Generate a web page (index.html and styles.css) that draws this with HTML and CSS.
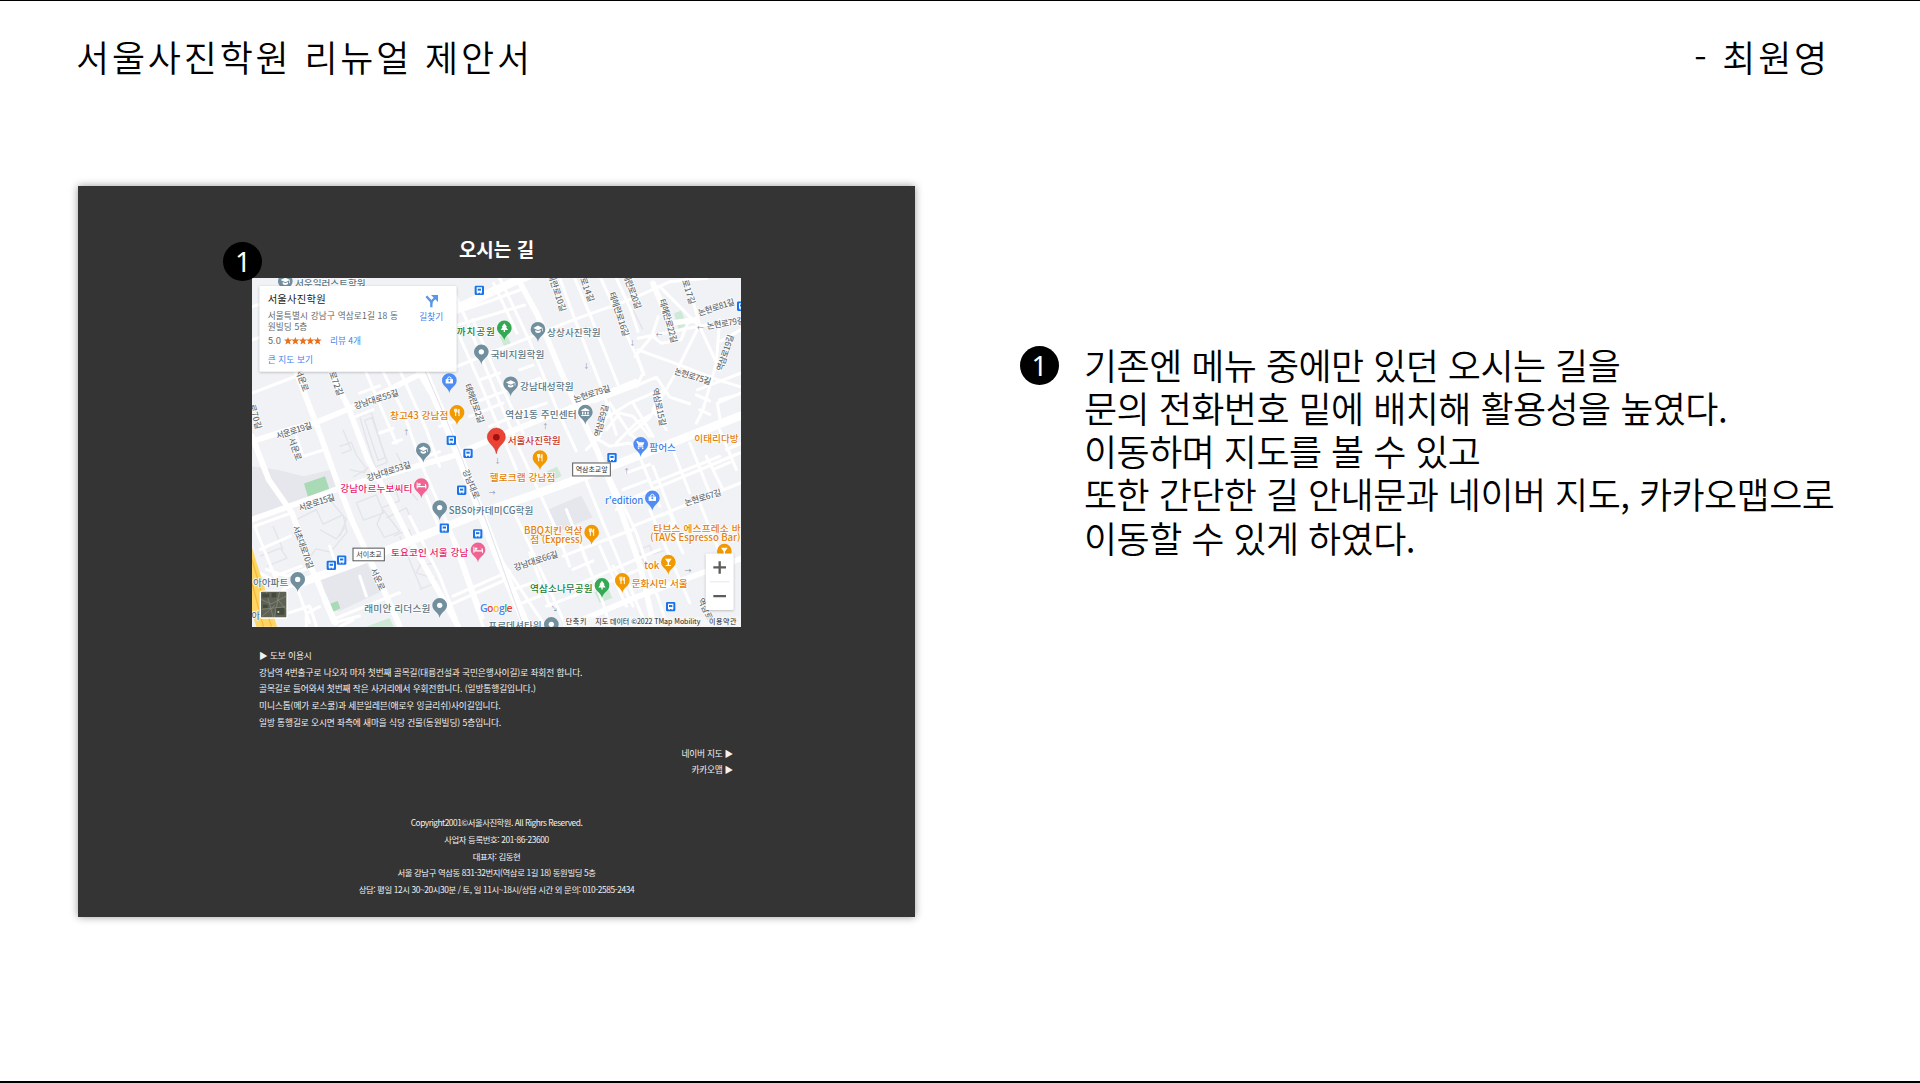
FILE: index.html
```html
<!DOCTYPE html>
<html lang="ko">
<head>
<meta charset="utf-8">
<title>서울사진학원 리뉴얼 제안서</title>
<link rel="stylesheet" href="styles.css">
</head>
<body>
<div class="slide">
  <header class="slide-header">
    <h1>서울사진학원 리뉴얼 제안서</h1>
    <p class="author">- 최원영</p>
  </header>
  <main class="content">
    <section class="mockup">
      <h2>오시는 길</h2>
      <div class="map-wrap">
        <span class="badge badge-map">1</span>
        <svg class="map" viewBox="37 24 1467 1049" preserveAspectRatio="none">
          <defs>
            <path id="pin" d="M0 38C-3 20-22 17-22 0a22 22 0 1 1 44 0C22 17 3 20 0 38z"/>
            <circle id="i-dot" r="8" fill="#fff"/>
            <g id="i-cap" fill="#fff"><path d="M-14-4L0-11 14-4 0 3zM-8 2v6Q0 14 8 8V2L0 6z"/><path d="M12-3h2v9h-2z"/></g>
            <g id="i-food" fill="none" stroke="#fff" stroke-width="3"><path d="M-7-11v7q0 4 3 4t3-4v-7M-4-11V11M6 11V-10q-3 3-3 10h3"/></g>
            <g id="i-bag" fill="#fff"><path d="M-11-4h22v13h-22z"/><path d="M-5-4v-4q5-6 10 0v4" fill="none" stroke="#fff" stroke-width="3"/><circle cy="1" r="3" fill="#4285f4"/></g>
            <g id="i-bed" fill="#fff"><path d="M-14-9h3v10h22v-3q0-4-4-4h-9v5h-7v-5h11q13-1 13 7v8h-3V5h-23v4h-3z"/><circle cx="-7" cy="-3" r="3"/></g>
            <path id="i-tree" fill="#fff" d="M0-14l8 11H5l6 9H2v6h-4V6h-9l6-9h-3z"/>
            <g id="i-cart" fill="#fff"><path d="M-13-10h5l2 4h17L7 4h-13l-1 2H8v3h-18l3-6-5-10z"/><circle cx="-6" cy="12" r="2.5"/><circle cx="6" cy="12" r="2.5"/></g>
            <path id="i-hall" fill="#fff" d="M0-12L12-6v3h-24v-3zM-10-1h4v8h-4zM-2-1h4v8h-4zM6-1h4v8H6zM-12 9h24v3h-24z"/>
            <path id="i-bar" fill="#fff" d="M-10-10h20L2 1v8h6v3H-8V9h6V1z"/>
            <g id="bus"><rect x="-14" y="-14" width="28" height="28" rx="4" fill="#1a73e8"/><path d="M-8-9H8V7H6v3H3V7h-6v3h-3V7h-2z" fill="#fff"/><path d="M-5-5H5v6H-5z" fill="#1a73e8"/></g>
            <path id="star" d="M0-12l3 8h9l-7 6 3 9-8-5-8 5 3-9-7-6h9z"/>
          </defs>
          <rect x="37" y="24" width="1467" height="1049" fill="#f1f2f5"/>
          <g fill="#e6e7ed">
            <path d="M37 590l75 10 80 20 82 -20 20 65-180 60-77 25z"/>
            <path d="M925 720l100-42 34 66-108 42zM245 930l135-50 48 85-128 60h-30z"/>
          </g>
          <g fill="#ceead6"><path d="M1303 130l22-8 17 45-26 10zM780 200l20-8 14 30-20 9zM922 605l30-14 14 28-30 15zM1064 968l40-16 14 34-38 14zM380 1072l70-26 12 26z"/></g>
          <path fill="#a8dab5" d="M193 642l63-22 14 42-64 23zM272 1003l22-8 8 22-22 10z"/>
          <g class="outline">
            <path d="M360 440l35-12 28 90 20 60-36 14-26-80zM375 452l22-8 40 120-22 8zM300 530l35-12 16 40 30 40-40 24M310 480l25 60-30 12M330 600l44 10 12-18M170 750l60-30 20 44 60-28 12 52-50 60-44-10-20 30M240 780l50 28 30-40M270 690l50 60-20 50M350 700l60-24 22 54-60 22zM400 660l60-20 20 54-56 22M430 720l50 66-46 18-22-40zM440 745l60-30 26 60M490 640l44 52M462 800l46-20 16 44M480 800l66 160M520 800l22 90 40-10M560 850l-30 60 60 20M540 960l50-20 20 40M62 860l60-24 20 30-60 24M100 770l30 70M1200 840l30-12 10 26 32-10M1200 850l20 40M470 550l30 60M1180 120l30 60M130 140l60-20M500 170l60-24"/>
          </g>
          <g class="road minor">
            <path d="M37 370l130-50M37 210l60-20M37 110L210 60M150 24l90 200M220 24l50 130M350 24l30 80M640 60l40 90 80 200 80 190 110 240 40 110M560 310L640 490"/>
            <path d="M660 200l70 160 100 240M700 150l60 140 90 200M780 24l90 190 80 200 60 130M762 40l70 150M960 24l40 110 90 230 40 130M1005 24l50 120 80 200M1083 24l50 110 60 130 20 50M1130 24l45 100 20 60"/>
            <path d="M640 130l120-40 80-30M651 290l200-80 150-60 180-65 110-50 110-10M700 400l120-45M840 350l60-25 20 30M720 330l60-20M750 470l120-50M690 440l100-40M840 300l40-14M655 165l200-60M800 440l120-40"/>
            <path d="M1195 205l180-35 128-22M1195 240l110 40 130 50 70 22M1186 260l50-60 20-60M1240 200l24 20 60-10 20-50M1190 250l20 60-20 40M1260 50l120 120 60 130M1340 24l40 140-80 160-70 120-60 50"/>
            <path d="M1440 150l-10 130-40 140-20 40M1503 180l-60 34M1503 310l-130 50M1503 370l-70 30 10 60M1370 375l40 18M1380 420l30 14M1440 390l50-14"/>
            <path d="M990 410l80-16 110-42 70-30 40 60 60 20M1090 450l80-50 70-30 40 90M1100 480l40-50 40 10 50 60M1130 520l60-60 70-40M1060 500l50 30 60-10 60 30M1180 400l60 100M1110 400l60 90 40 40M1040 540l40-40 20-60M1270 360l-30 60 40 60"/>
            <path d="M1130 720l60-40 120-50 190-80M1150 660l80-30M1200 560l60 150M1240 590l70 180M1300 540l50 130M1350 520l60 150M1400 560l50 100M1440 480l50 120M1460 540l43-18M1240 640l200-80M1160 610l70-26M1420 600l50-22"/>
            <path d="M1180 770l323-130M1030 610l60 150 80 190 50 120M1100 600l90 190 60 180 30 90M1230 720l120 280M1290 760l40 90M1380 700l60 150M1260 740l30-12 14 40"/>
            <path d="M970 860l130-50 80-30M1000 950l120-50 140-60M1030 850l60 150 20 70M1080 830l80 180M960 830l40-20M1000 900l60-26M1120 890l60 120M920 1010l80-30 200-80M980 720l60 150M720 720l70 160 120 180M810 700l70 150 90 200M870 850l60 160M850 1000l50-20M820 960l60-20"/>
            <path d="M430 305l60 120 60 170 110 250 70 200M480 300l80 180 40 110M530 300l40 70M380 310l90 210M360 370l60-22M400 420l-50 20M420 490l40-14M460 520l26-10M600 470l60-20M560 560l40-14M510 740l90 180 50 130M600 700l80 230 50 140M640 980l170-75M600 1020l200-90M560 680l40 100"/>
            <path d="M170 500l20 60 70-22M45 770l60 150 80-30M62 840l90-40M45 770l100-36M80 900l60 20 80-30M37 900l60 30M130 960l100-40 50 130 200-80M250 990l30 70 80-20M150 1030l60-20 20 60M170 950l40 110M200 1072v-40l40-20M300 1072l40-20M270 830l14 40M360 920l20 60"/>
          </g>
          <g class="road mid">
            <path d="M160 280l80 210 50 140 50 130 60 130 80 180M265 290l60 120 60 160 60 110 60 120 150 270M37 500l50 130 70 100 60 170 70 160"/>
            <path d="M37 515l80-25 120-35 120-50 200-100M37 750l280-100 320-90 110-48 140-56 130-50 170-70"/>
            <path d="M833 24l60 110 70 170 110 240 60 150 70 200 40 178M550 300l80 190"/>
            <path d="M1240 40l50 120 80-10M980 1072l200-85 325-120"/>
          </g>
          <g class="road major">
            <path d="M651 115l150-70 70-30M170 945l170-62 200-80 190-75 230-80 160-60 180-70 203-80"/>
            <path d="M535 260l100 240 70 180 60 160 100 240"/>
          </g>
          <path class="lane" d="M555 300l82 190 66 170 42 110 106 300"/>
          <path d="M37 835l75 237H50L37 1030z" fill="#fdd663"/><path d="M37 870l58 202M37 940l34 132" stroke="#f9b93a" stroke-width="4" fill="none"/>

          <g class="street">
            <text transform="translate(190 330) rotate(70)">서운로</text>
            <text transform="translate(292 340) rotate(70)">로72길</text>
            <text transform="translate(409 386) rotate(-18)" textLength="138">강남대로55길</text>
            <text transform="translate(50 440) rotate(74)">로70길</text>
            <text transform="translate(162 480) rotate(-18)" textLength="112">서운로19길</text>
            <text transform="translate(169 537) rotate(70)">서운로</text>
            <text transform="translate(446 602) rotate(-18)" textLength="138">강남대로53길</text>
            <text transform="translate(230 696) rotate(-18)" textLength="112">서운로15길</text>
            <text transform="translate(193 832) rotate(70)" textLength="136">서초대로70길</text>
            <text transform="translate(417 928) rotate(66)">서운로</text>
            <text transform="translate(697 642) rotate(68)">강남대로</text>
            <text transform="translate(707 400) rotate(70)" textLength="124">테헤란로2길</text>
            <text transform="translate(955 66) rotate(72)" textLength="120">헤란로10길</text>
            <text transform="translate(1045 58) rotate(70)">로14길</text>
            <text transform="translate(1141 132) rotate(72)" textLength="138">테헤란로16길</text>
            <text transform="translate(1180 62) rotate(70)" textLength="112">헤란로20길</text>
            <text transform="translate(1289 152) rotate(74)" textLength="136">테헤란로22길</text>
            <text transform="translate(1350 65) rotate(72)">로17길</text>
            <text transform="translate(1429 109) rotate(-18)" textLength="114">논현로81길</text>
            <text transform="translate(1457 157) rotate(-9)" textLength="114">논현로79길</text>
            <text transform="translate(1454 248) rotate(-72)" textLength="114">역삼로19길</text>
            <text transform="translate(1360 317) rotate(17)" textLength="114">논현로75길</text>
            <text transform="translate(1056 369) rotate(-18)" textLength="114">논현로79길</text>
            <text transform="translate(1261 411) rotate(78)" textLength="116">역삼로15길</text>
            <text transform="translate(1082 452) rotate(-75)" textLength="100">역삼로9길</text>
            <text transform="translate(1389 681) rotate(-17)" textLength="114">논현로67길</text>
            <text transform="translate(888 871) rotate(-18)" textLength="138">강남대로66길</text>
            <text transform="translate(1400 1018) rotate(65)">역삼로</text>
          </g>
          <g class="arrow"><text x="1030" y="294">↓</text><text x="1168" y="224">↓</text><text x="1248" y="202">←</text><text x="1372" y="180">←</text><text x="907" y="478">↑</text><text x="764" y="579">↓</text><text x="490" y="496">↑</text><text x="747" y="677">→</text><text x="1151" y="613">↑</text><text x="1335" y="912">→</text><text x="934" y="1026">↘</text></g>

          <g class="poi slate">
            <text x="166" y="51" textLength="212">서운일러스트학원</text>
            <text x="922" y="197" textLength="161">상상사진학원</text>
            <text x="753" y="264" textLength="161">국비지원학원</text>
            <text x="841" y="361" textLength="161">강남대성학원</text>
            <text x="797" y="444" textLength="214">역삼1동 주민센터</text>
            <text x="627" y="733" textLength="254">SBS아카데미CG학원</text>
            <text x="40" y="949" textLength="106">아아파트</text>
            <text x="374" y="1027" textLength="198">래미안 리더스원</text>
            <text x="746" y="1080" textLength="160">프로데셔타워</text>
            <text x="35" y="1050">아</text>
          </g>
          <g class="poi orange">
            <text x="451" y="447" textLength="175">창고43 강남점</text>
            <text x="750" y="634" textLength="197">헬로크랩 강남점</text>
            <text x="1364" y="517" textLength="133">이태리다방</text>
            <text x="853" y="793" textLength="175">BBQ치킨 역삼</text>
            <text x="872" y="822" textLength="158">점 (Express)</text>
            <text x="1241" y="786" textLength="262">타브스 에스프레소 바</text>
            <text x="1232" y="816" textLength="270">(TAVS Espresso Bar)</text>
            <text x="1214" y="898" textLength="45">tok</text>
            <text x="1176" y="953" textLength="168">문화시민 서울</text>
          </g>
          <g class="poi green"><text x="640" y="194" textLength="126">|까치공원</text><text x="871" y="967" textLength="188">역삼소나무공원</text></g>
          <g class="poi blue"><text x="1229" y="543" textLength="80">팜어스</text><text x="1096" y="704" textLength="115">r'edition</text></g>
          <g class="poi pink"><text x="302" y="666" textLength="216">강남아르누보씨티</text><text x="454" y="860" textLength="232">토요코인 서울 강남</text></g>
          <g class="poi red"><text x="804" y="522" textLength="159">서울사진학원</text></g>

          <g fill="#728f9e">
            <g transform="translate(137 34)"><use href="#pin"/><use href="#i-cap"/></g>
            <g transform="translate(895 178)"><use href="#pin"/><use href="#i-cap"/></g>
            <g transform="translate(725 246)"><use href="#pin"/><use href="#i-dot"/></g>
            <g transform="translate(813 342)"><use href="#pin"/><use href="#i-cap"/></g>
            <g transform="translate(1037 427)"><use href="#pin"/><use href="#i-hall"/></g>
            <g transform="translate(551 541)"><use href="#pin"/><use href="#i-cap"/></g>
            <g transform="translate(600 714)"><use href="#pin"/><use href="#i-dot"/></g>
            <g transform="translate(174 930)"><use href="#pin"/><use href="#i-dot"/></g>
            <g transform="translate(600 1008)"><use href="#pin"/><use href="#i-dot"/></g>
            <g transform="translate(935 1065)"><use href="#pin"/><use href="#i-dot"/></g>
          </g>
          <g fill="#f29900">
            <g transform="translate(652 428)"><use href="#pin"/><use href="#i-food"/></g>
            <g transform="translate(901 564)"><use href="#pin"/><use href="#i-food"/></g>
            <g transform="translate(1056 788)"><use href="#pin"/><use href="#i-food"/></g>
            <g transform="translate(1148 933)"><use href="#pin"/><use href="#i-food"/></g>
            <g transform="translate(1286 878)"><use href="#pin"/><use href="#i-bar"/></g>
            <g transform="translate(1454 845)"><use href="#pin"/><use href="#i-bar"/></g>
          </g>
          <g fill="#4f8df5">
            <g transform="translate(629 332)"><use href="#pin"/><use href="#i-bag"/></g>
            <g transform="translate(1238 685)"><use href="#pin"/><use href="#i-bag"/></g>
            <g transform="translate(1203 524)"><use href="#pin"/><use href="#i-cart"/></g>
          </g>
          <g fill="#f06292">
            <g transform="translate(545 648)"><use href="#pin"/><use href="#i-bed"/></g>
            <g transform="translate(715 841)"><use href="#pin"/><use href="#i-bed"/></g>
          </g>
          <g fill="#34a853">
            <g transform="translate(794 174)"><use href="#pin"/><use href="#i-tree"/></g>
            <g transform="translate(1087 948)"><use href="#pin"/><use href="#i-tree"/></g>
          </g>
          <path fill="#ea4335" stroke="#c5221f" stroke-width="1.5" d="M770 552C767 528 743 522 743 502a27 27 0 1 1 54 0C797 522 773 528 770 552z"/><circle cx="770" cy="503" r="10" fill="#a50e0e"/>
          <use href="#bus" x="719" y="61"/><use href="#bus" x="1506" y="109"/><use href="#bus" x="635" y="512"/><use href="#bus" x="685" y="551"/><use href="#bus" x="666" y="662"/><use href="#bus" x="614" y="776"/><use href="#bus" x="714" y="793"/><use href="#bus" x="306" y="872"/><use href="#bus" x="275" y="888"/><use href="#bus" x="1117" y="564"/><use href="#bus" x="1293" y="1012"/>
          <g class="sign">
            <rect x="999" y="580" width="113" height="39"/><text x="1008" y="607" textLength="96">역삼초교앞</text>
            <rect x="340" y="836" width="94" height="38"/><text x="350" y="863" textLength="76">서이초교</text>
          </g>

          <rect x="62" y="965" width="80" height="81" rx="4" fill="#5d6254" stroke="#fff" stroke-width="4"/>
          <path d="M64 990l30 14 46-24M80 967l20 76M120 967l-16 76M66 1020l72-8M110 985l28 34M66 1042l40-34" stroke="#8d8e80" stroke-width="2" fill="none"/>
          <path d="M68 972h20v12H68zM110 1016h24v20h-24zM96 970h14v14H96zM70 1006h14v10H70z" fill="#444b3d"/>
          <circle cx="116" cy="1028" r="3" fill="#d8d8d0"/>

          <text class="google" x="721" y="1027" textLength="98"><tspan fill="#4285f4">G</tspan><tspan fill="#ea4335">o</tspan><tspan fill="#fbbc04">o</tspan><tspan fill="#4285f4">g</tspan><tspan fill="#34a853">l</tspan><tspan fill="#ea4335">e</tspan></text>

          <rect x="970" y="1042" width="534" height="31" fill="#f5f5f5" opacity=".75"/>
          <g class="legal">
            <text x="978" y="1063" textLength="62">단축키</text><text x="1067" y="1063" textLength="315">지도 데이터 ©2022 TMap Mobility</text><text x="1408" y="1063" textLength="82">이용약관</text>
          </g>

          <g class="shadow"><rect x="1398" y="852" width="84" height="170" rx="3" fill="#fff"/></g>
          <path d="M1411 937h58" stroke="#e6e6e6" stroke-width="3"/>
          <path d="M1421 894h38M1440 875v38M1421 980h38" stroke="#5c5c5c" stroke-width="7"/>

          <g class="shadow"><rect x="59" y="48" width="592" height="258" rx="3" fill="#fff"/></g>
          <g class="info">
            <text class="name" x="84" y="98" textLength="174">서울사진학원</text>
            <text x="84" y="146" textLength="391">서울특별시 강남구 역삼로1길 18 동</text>
            <text x="84" y="179" textLength="119">원빌딩 5층</text>
            <text class="score" x="84" y="222" textLength="40">5.0</text>
            <text class="link" x="271" y="222" textLength="93">리뷰 4개</text>
            <text class="link" x="84" y="279" textLength="136">큰 지도 보기</text>
            <text class="link" x="539" y="149" textLength="72">길찾기</text>
          </g>
          <g fill="#e7711b"><use href="#star" x="145" y="213"/><use href="#star" x="167" y="213"/><use href="#star" x="190" y="213"/><use href="#star" x="212" y="213"/><use href="#star" x="234" y="213"/></g>
          <path d="M575 112V98Q575 94 571 91L560 79M575 104Q575 94 580 90L588 82" fill="none" stroke="#5a96e6" stroke-width="7"/><path d="M574 75h21v21z" fill="#5a96e6"/>
        </svg>
      </div>
      <div class="directions">
        <p>▶ 도보 이용시</p>
        <p>강남역 4번출구로 나오자 마자 첫번째 골목길(대륭건설과 국민은행사이길)로 좌회전 합니다.</p>
        <p>골목길로 들어와서 첫번째 작은 사거리에서 우회전합니다. (일방통행길입니다.)</p>
        <p>미니스톱(메가 로스쿨)과 세븐일레븐(애로우 잉글리쉬)사이길입니다.</p>
        <p>일방 통행길로 오시면 좌측에 새마을 식당 건물(동원빌딩) 5층입니다.</p>
      </div>
      <div class="map-links">
        <p>네이버 지도 ▶</p>
        <p>카카오맵 ▶</p>
      </div>
      <footer class="site-footer">
        <p class="copyright">Copyright2001©서울사진학원. All Righrs Reserved.</p>
        <p>사업자 등록번호: 201-86-23600</p>
        <p>대표자: 김동현</p>
        <p>서울 강남구 역삼동 831-32번지(역삼로 1길 18) 동원빌딩 5층</p>
        <p>상담: 평일 12시 30~20시30분 / 토, 일 11시~18시/상담 시간 외 문의: 010-2585-2434</p>
      </footer>
    </section>
    <section class="note">
      <span class="badge">1</span>
      <p>기존엔 메뉴 중에만 있던 오시는 길을<br>문의 전화번호 밑에 배치해 활용성을 높였다.<br>이동하며 지도를 볼 수 있고<br>또한 간단한 길 안내문과 네이버 지도, 카카오맵으로<br>이동할 수 있게 하였다.</p>
    </section>
  </main>
</div>
</body>
</html>
```
FILE: styles.css
```css
* { box-sizing: border-box; }
body, h1, h2, p { margin: 0; }
body {
  background: #fff;
  color: #000;
  font-family: "Noto Sans CJK KR", sans-serif;
}
.slide {
  height: 1083px;
  border-top: 1px solid #000;
  border-bottom: 2px solid #000;
  overflow: hidden;
}
.slide-header {
  display: flex;
  justify-content: space-between;
  height: 185px;
  padding: 29px 90px 0 76px;
}
.slide-header h1, .author {
  font-size: 36px;
  font-weight: 350;
  line-height: 52px;
  letter-spacing: 2.8px;
}
.content {
  display: flex;
  align-items: flex-start;
  padding-left: 78px;
}
.mockup {
  width: 837px;
  height: 730.5px;
  padding-top: 49px;
  background: #343434;
  color: #f2f2f2;
  box-shadow: 0 0 8px rgba(0, 0, 0, .4);
}
.mockup h2 {
  font-size: 19px;
  line-height: 28px;
  text-align: center;
  color: #fff;
}
.map-wrap {
  position: relative;
  width: 489px;
  height: 349px;
  margin: 15.4px 0 0 174.4px;
}
.map {
  display: block;
  width: 489px;
  height: 349px;
  overflow: hidden;
}
.badge {
  display: flex;
  flex: none;
  align-items: center;
  justify-content: center;
  width: 39px;
  height: 39px;
  border-radius: 50%;
  background: #000;
  color: #fff;
  font-family: "Noto Sans", sans-serif;
  font-size: 28px;
  line-height: 39px;
}
.badge-map {
  position: absolute;
  left: -29px;
  top: -36px;
  z-index: 1;
}
.directions, .map-links, .site-footer {
  font-size: 8.7px;
  line-height: 16.75px;
}
.directions {
  margin: 20.4px 0 0 181px;
  letter-spacing: -.1px;
}
.directions p { white-space: nowrap; }
.map-links {
  margin: 14px 182px 0 0;
  letter-spacing: -.25px;
  text-align: right;
}
.site-footer {
  margin-top: 35px;
  font-size: 8.4px;
  letter-spacing: -.4px;
  text-align: center;
}
.site-footer .copyright { letter-spacing: -.5px; }
.note {
  display: flex;
  gap: 25px;
  margin: 160px 0 0 105px;
}
.note p {
  margin-top: -3.5px;
  font-size: 36px;
  font-weight: 350;
  line-height: 43.3px;
  letter-spacing: -.55px;
  white-space: nowrap;
}

/* Map artwork */
.road, .outline, .lane { fill: none; stroke-linejoin: round; }
.road { stroke: #fff; stroke-linecap: round; }
.minor { stroke-width: 9px; }
.mid { stroke-width: 17px; }
.major { stroke-width: 25px; }
.outline { stroke: #e2e4e9; stroke-width: 4px; }
.lane { stroke: #dfe2e8; stroke-width: 3px; }
.street text {
  font-size: 25.5px;
  font-weight: 500;
  fill: #686d72;
  text-anchor: middle;
  dominant-baseline: central;
}
.street text, .poi text {
  stroke: #fff;
  stroke-width: 4px;
  paint-order: stroke;
}
.poi text { font-size: 29px; font-weight: 500; }
.slate text { fill: #5b7785; }
.orange text { fill: #e37f0a; }
.green text { fill: #188038; }
.blue text { fill: #3e7fed; }
.pink text { fill: #e91e70; }
.red text { fill: #c5322c; }
.arrow text { font-size: 20px; fill: #8790a8; }
.sign rect { fill: #fff; stroke: #555; stroke-width: 3px; }
.sign text { font-size: 21px; fill: #333; }
.google {
  font-family: "Open Sans", sans-serif;
  font-size: 32px;
  font-weight: 600;
  stroke: #fff;
  stroke-width: 3px;
  paint-order: stroke;
}
.legal text { font-size: 21px; fill: #222; }
.shadow { filter: drop-shadow(0 2px 3px rgba(0, 0, 0, .25)); }
.info text { font-size: 26px; fill: #666; }
.info .name { font-size: 31px; fill: #222; }
.info .score { font-family: Roboto, sans-serif; font-size: 28px; }
.info .link { fill: #427fed; }
```
